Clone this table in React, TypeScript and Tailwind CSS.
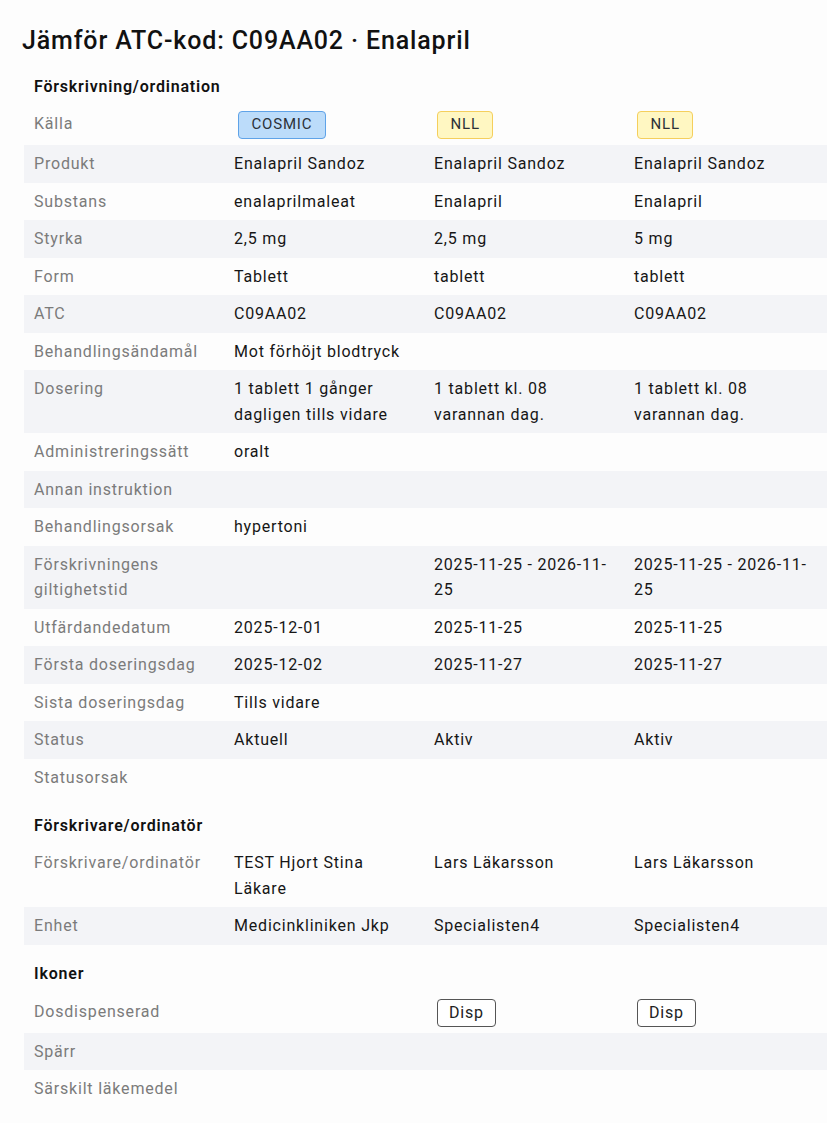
type Cell = string | { badge: "cosmic" | "nll" } | { disp: true } | null;

interface Row {
  label: string;
  values: Cell[];
}

interface Section {
  title: string;
  rows: Row[];
}

const sections: Section[] = [
  {
    title: "Förskrivning/ordination",
    rows: [
      { label: "Källa", values: [{ badge: "cosmic" }, { badge: "nll" }, { badge: "nll" }] },
      { label: "Produkt", values: ["Enalapril Sandoz", "Enalapril Sandoz", "Enalapril Sandoz"] },
      { label: "Substans", values: ["enalaprilmaleat", "Enalapril", "Enalapril"] },
      { label: "Styrka", values: ["2,5 mg", "2,5 mg", "5 mg"] },
      { label: "Form", values: ["Tablett", "tablett", "tablett"] },
      { label: "ATC", values: ["C09AA02", "C09AA02", "C09AA02"] },
      { label: "Behandlingsändamål", values: ["Mot förhöjt blodtryck", null, null] },
      {
        label: "Dosering",
        values: ["1 tablett 1 gånger dagligen tills vidare", "1 tablett kl. 08 varannan dag.", "1 tablett kl. 08 varannan dag."],
      },
      { label: "Administreringssätt", values: ["oralt", null, null] },
      { label: "Annan instruktion", values: [null, null, null] },
      { label: "Behandlingsorsak", values: ["hypertoni", null, null] },
      { label: "Förskrivningens giltighetstid", values: [null, "2025-11-25 - 2026-11-25", "2025-11-25 - 2026-11-25"] },
      { label: "Utfärdandedatum", values: ["2025-12-01", "2025-11-25", "2025-11-25"] },
      { label: "Första doseringsdag", values: ["2025-12-02", "2025-11-27", "2025-11-27"] },
      { label: "Sista doseringsdag", values: ["Tills vidare", null, null] },
      { label: "Status", values: ["Aktuell", "Aktiv", "Aktiv"] },
      { label: "Statusorsak", values: [null, null, null] },
    ],
  },
  {
    title: "Förskrivare/ordinatör",
    rows: [
      { label: "Förskrivare/ordinatör", values: ["TEST Hjort Stina Läkare", "Lars Läkarsson", "Lars Läkarsson"] },
      { label: "Enhet", values: ["Medicinkliniken Jkp", "Specialisten4", "Specialisten4"] },
    ],
  },
  {
    title: "Ikoner",
    rows: [
      { label: "Dosdispenserad", values: [null, { disp: true }, { disp: true }] },
      { label: "Spärr", values: [null, null, null] },
      { label: "Särskilt läkemedel", values: [null, null, null] },
    ],
  },
];

function Value({ cell }: { cell: Cell }) {
  if (!cell) return null;
  if (typeof cell === "string") return <>{cell}</>;
  if ("badge" in cell) {
    // källa-märke: blått för COSMIC, gult för NLL
    return cell.badge === "cosmic" ? (
      <span className="ml-[4px] inline-flex h-[28px] items-center rounded-[4px] border border-[#5fa3e8] bg-[#bcdcfa] px-[12.5px] align-top text-[15px] text-[#2c3138]">
        COSMIC
      </span>
    ) : (
      <span className="ml-[3px] inline-flex h-[28px] items-center rounded-[4px] border border-[#f5cf5c] bg-[#fff7c2] px-[12.5px] align-top text-[15px] text-[#2c3138]">
        NLL
      </span>
    );
  }
  return (
    <span className="ml-[3px] inline-flex h-[28px] items-center rounded-[4px] border border-[#555] bg-white px-[11px] align-top text-[16px] text-[#222]">
      Disp
    </span>
  );
}

export default function App() {
  return (
    <div className="min-h-screen bg-[#fdfdfd] pt-[25px] font-['Roboto',sans-serif] tracking-[0.05em]">
      <h1 className="pl-[22px] text-[25px] font-medium leading-[32px] tracking-[0.85px] text-[#111]">
        Jämför ATC-kod: C09AA02 · Enalapril
      </h1>

      <div className="pl-[24px]">
        {sections.map((section) => (
          <div key={section.title} className="mt-[10.5px]">
            <div className="px-[10px] py-[6px] text-[16px] font-semibold leading-[25.5px] text-[#111]">
              {section.title}
            </div>
            {section.rows.map((row, ri) => (
              <div
                key={row.label}
                className={`grid grid-cols-[200px_200px_200px_1fr] text-[16px] leading-[25.5px] ${ri % 2 === 1 ? "bg-[#f3f4f7]" : ""}`}
              >
                <div className="px-[10px] py-[6px] text-[#7b7b7b]">{row.label}</div>
                {row.values.map((v, vi) => (
                  <div key={vi} className="px-[10px] py-[6px] text-[#161616]">
                    <Value cell={v} />
                  </div>
                ))}
              </div>
            ))}
          </div>
        ))}
      </div>
    </div>
  );
}
